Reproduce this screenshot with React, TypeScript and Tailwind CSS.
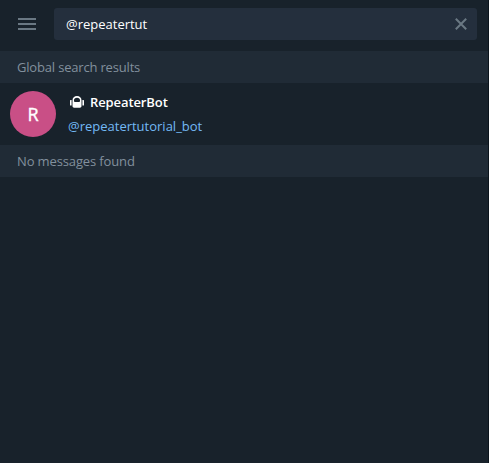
import React from "react";

function MenuButton() {
  return (
    <button aria-label="Menu" className="flex h-8 w-[18px] flex-col justify-center gap-[3px]">
      <span className="h-0.5 w-full bg-[#6a7883]" />
      <span className="h-0.5 w-full bg-[#6a7883]" />
      <span className="h-0.5 w-full bg-[#6a7883]" />
    </button>
  );
}

function ClearIcon() {
  return (
    <svg width="12" height="12" viewBox="0 0 12 12" fill="none" stroke="#6a7883" strokeWidth="2">
      <path d="M.8.8l10.4 10.4M11.2.8L.8 11.2" />
    </svg>
  );
}

function BotIcon() {
  return (
    <svg width="14" height="12" viewBox="0 0 14 12" fill="#fff">
      <rect x="0" y="4" width="1.6" height="5.500" rx=".5" />
      <rect x="12.4" y="4" width="1.6" height="5.500" rx=".5" />
      <path
        fillRule="evenodd"
        d="M2.500 4.300C2.500 1.700 4.400 0 7 0s4.500 1.700 4.500 4.300v5.700c0 1-.6 1.700-1.600 1.700H4.100c-1 0-1.600-.7-1.600-1.700zM4 5.100c0 .6.300.9.900.9h4.200c.6 0 .9-.3.900-.9V4.300C10 2.700 8.900 1.700 7 1.700S4 2.700 4 4.300z"
      />
    </svg>
  );
}

function SectionBar({ children }: { children: React.ReactNode }) {
  return (
    <div className="flex h-8 items-center bg-[#202b36] pl-[17px] text-[#82909d]">{children}</div>
  );
}

export default function App() {
  return (
    <div className="h-[463px] w-[489px] overflow-hidden border-r border-[#0b141c] bg-[#18222b] font-['Open_Sans',sans-serif] text-[13px] leading-[18px]">
      <header className="flex h-[51px] items-start gap-[18px] pt-2 pr-[11px] pl-[18px]">
        <MenuButton />
        <div className="flex h-8 flex-1 items-center justify-between rounded-[3px] bg-[#242f3d] pr-2.5 pl-3 text-white">
          <span>@repeatertut</span>
          <ClearIcon />
        </div>
      </header>
      <SectionBar>
        <span className="tracking-[-0.18px]">Global search results</span>
      </SectionBar>
      <div className="flex h-[62px] items-center gap-3 pl-2.5">
        <div className="flex size-[46px] items-center justify-center rounded-full bg-[#c94f86] text-lg text-white [-webkit-text-stroke:0.4px_white]">
          R
        </div>
        <div className="flex flex-col gap-1.5">
          <div className="flex h-[18px] items-center gap-1.5 pl-0.5 font-semibold tracking-[-0.1px] text-white">
            <BotIcon />
            <span>RepeaterBot</span>
          </div>
          <div className="text-[#73b9f5]">@repeatertutorial_bot</div>
        </div>
      </div>
      <SectionBar>
        <span className="tracking-[-0.13px]">No messages found</span>
      </SectionBar>
    </div>
  );
}
